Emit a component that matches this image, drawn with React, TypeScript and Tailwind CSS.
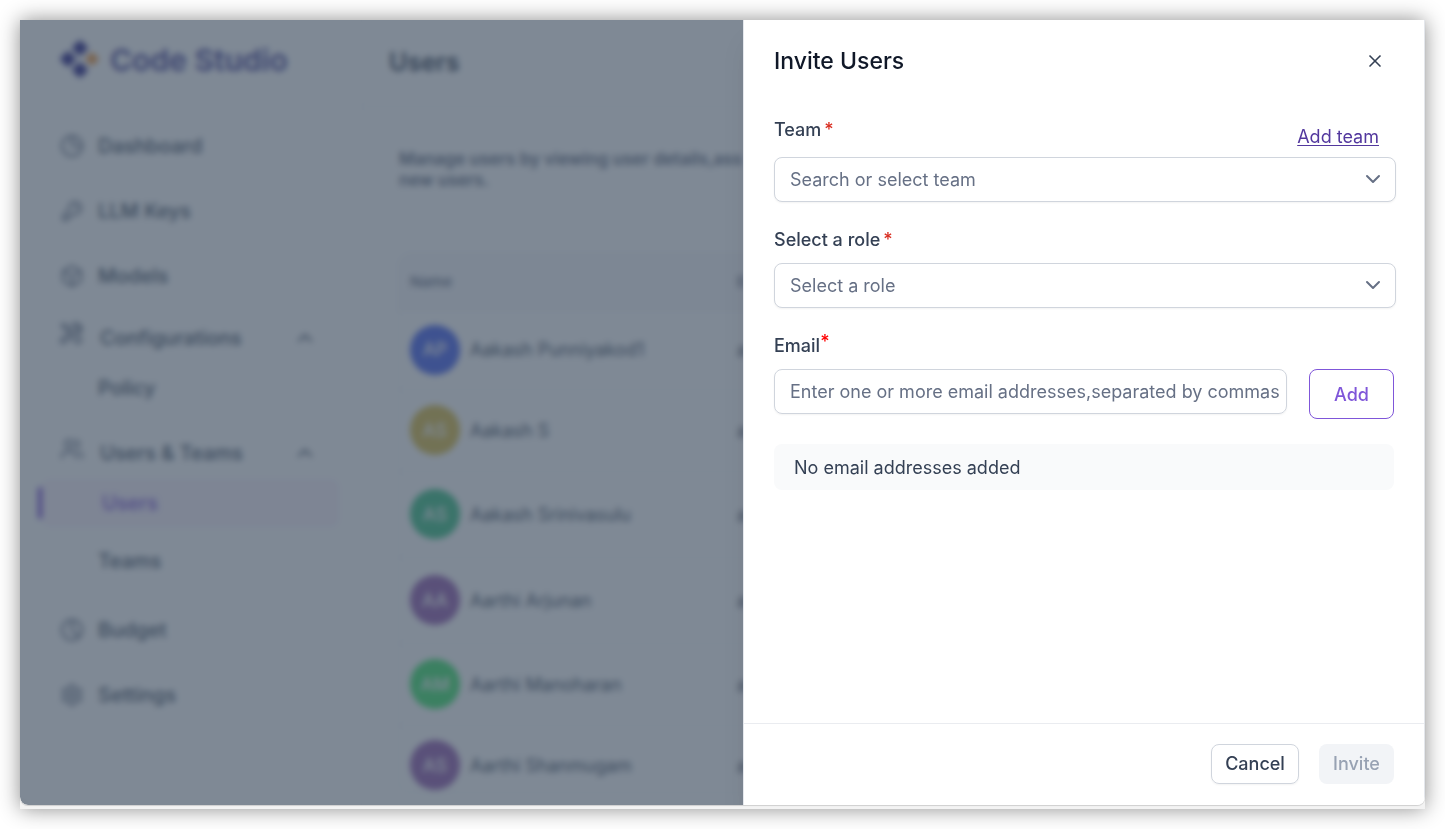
import { useState, type ReactNode } from "react";
import { Box, ChevronDown, ChevronUp, Settings, Users, X } from "lucide-react";

function Logo() {
  return (
    <svg viewBox="0 0 40 40" className="size-10 shrink-0" aria-hidden="true">
      <g fill="#2f2a8c">
        <rect x="14" y="3" width="12" height="12" rx="2" transform="rotate(45 20 9)" />
        <rect x="2" y="14" width="12" height="12" rx="2" transform="rotate(45 8 20)" />
        <rect x="14" y="25" width="12" height="12" rx="2" transform="rotate(45 20 31)" />
      </g>
      <rect x="27" y="15" width="10" height="10" rx="1" transform="rotate(45 32 20)" fill="#f0983f" />
    </svg>
  );
}

function LineIcon({ children }: { children: ReactNode }) {
  return (
    <svg
      viewBox="0 0 24 24"
      className="size-6"
      fill="none"
      stroke="currentColor"
      strokeWidth="2"
      strokeLinecap="round"
      strokeLinejoin="round"
      aria-hidden="true"
    >
      {children}
    </svg>
  );
}

const PieIcon = () => (
  <LineIcon>
    <circle cx="12" cy="12" r="10" />
    <path d="M12 2v10h10" />
  </LineIcon>
);

const BudgetIcon = () => (
  <LineIcon>
    <circle cx="12" cy="12" r="10" />
    <path d="M12 2v10l7 7" />
  </LineIcon>
);

const KeyIcon = () => (
  <LineIcon>
    <path d="M17 9a2 2 0 0 0-2-2M15 15a6 6 0 1 0-6-6c0 .27.02.54.05.81.06.43.09.65.07.79-.02.14-.05.21-.12.34-.06.12-.18.24-.42.48l-5.11 5.11c-.17.17-.26.26-.32.36-.06.09-.1.19-.12.29-.03.11-.03.24-.03.48V19.4c0 .56 0 .84.11 1.05.1.19.25.35.44.44.21.11.49.11 1.05.11H7v-2h2v-2h2l1.58-1.58c.24-.24.36-.36.48-.42.12-.07.2-.1.34-.12.14-.02.36.01.79.07.27.03.54.05.81.05Z" />
  </LineIcon>
);

const ToolsIcon = () => (
  <LineIcon>
    <path d="M6 6l4.5 4.5M6 6H3L2 3l1-1 3 1v3zM19.3 2.7l-2.6 2.6a1 1 0 0 0 0 1.4l.6.6a1 1 0 0 0 1.4 0l2.6-2.6a5 5 0 0 1-6.7 6.2 1 1 0 0 0-1 .2L4.5 20.5a2.1 2.1 0 0 1-3-3l9.4-9.1a1 1 0 0 0 .2-1 5 5 0 0 1 8.2-4.7zM12 16l4.5 4.5a2.1 2.1 0 0 0 3 0l1-1a2.1 2.1 0 0 0 0-3L17 13" />
  </LineIcon>
);

function NavLink({ icon, label, className }: { icon?: ReactNode; label: string; className: string }) {
  return (
    <a href="#" className={`flex items-center ${className}`}>
      <span className="flex w-[38px] shrink-0 text-[#667085]">{icon}</span>
      {label}
    </a>
  );
}

function NavGroup({ icon, label, className }: { icon: ReactNode; label: string; className: string }) {
  return (
    <button type="button" className={`flex items-center text-left ${className}`}>
      <span className="flex w-10 shrink-0 pb-2 text-[#667085]">{icon}</span>
      <span className="grow">{label}</span>
      <ChevronUp className="mr-11 size-6" />
    </button>
  );
}

function Sidebar() {
  return (
    <nav className="flex w-[342px] shrink-0 flex-col border-r border-[#f9fafb] text-[20px] font-medium text-[#475467]">
      <div className="flex h-[93px] items-start gap-[10px] pt-[19px] pl-10">
        <Logo />
        <span className="text-[30px] leading-[42px] font-semibold text-[#4a469a]">Code Studio</span>
      </div>
      <NavLink icon={<PieIcon />} label="Dashboard" className="h-[65px] pl-10" />
      <NavLink icon={<KeyIcon />} label="LLM Keys" className="h-[65px] pl-10" />
      <NavLink icon={<Box />} label="Models" className="h-[65px] pl-10" />
      <NavGroup icon={<ToolsIcon />} label="Configurations" className="h-[59px] pl-10" />
      <NavLink label="Policy" className="h-[42px] pl-10" />
      <NavGroup icon={<Users />} label="Users & Teams" className="mt-[18px] h-[52px] pl-10" />
      <div className="flex h-12 items-center pr-[22px] pl-[18px]">
        <span className="h-8 w-1 rounded-full bg-[#6d3fd1]" />
        <a href="#" className="flex h-full grow items-center rounded-lg bg-[#fbf3fd] pl-15 text-[#7f56d9]">
          Users
        </a>
      </div>
      <NavLink label="Teams" className="h-[68px] pl-10" />
      <NavLink icon={<BudgetIcon />} label="Budget" className="h-[70px] pl-10" />
      <NavLink icon={<Settings />} label="Settings" className="h-[60px] pl-10" />
    </nav>
  );
}

const people = [
  { initials: "AP", name: "Aakash Punniyakod1", color: "bg-[#506af0]", height: "h-[79px]" },
  { initials: "AS", name: "Aakash S", color: "bg-[#dcc050]", height: "h-[82px]" },
  { initials: "AS", name: "Aakash Srinivasulu", color: "bg-[#45c48a]", height: "h-[86px]" },
  { initials: "AA", name: "Aarthi Arjunan", color: "bg-[#9a66b4]", height: "h-[86px]" },
  { initials: "AM", name: "Aarthi Manoharan", color: "bg-[#48e673]", height: "h-[82px]" },
  { initials: "AS", name: "Aarthi Shanmugam", color: "bg-[#9a66b4]", height: "h-[80px]" },
];

function UsersPage() {
  return (
    <main className="flex min-w-0 grow flex-col">
      <header className="flex h-[87px] shrink-0 items-center border-b border-[#f2f4f7] pl-[27px]">
        <h1 className="text-[25px] font-semibold text-[#344054]">Users</h1>
      </header>
      <p className="mt-[42px] pl-[37px] text-[17px] leading-[21px] font-semibold whitespace-nowrap text-[#667085]">
        Manage users by viewing user details,ass
        <br />
        new users.
      </p>
      <div className="mt-[62px] mb-3 ml-9 min-h-0 flex-1 overflow-hidden rounded-xl border border-[#f2f4f7]">
        <table className="w-full table-fixed text-left">
          <thead>
            <tr className="h-[56px] border-b border-[#f2f4f7] bg-[#f9f9fc] text-[15px] text-[#667085]">
              <th className="w-[338px] pl-[11px] font-medium">Name</th>
              <th className="font-medium">Email</th>
            </tr>
          </thead>
          <tbody>
            {people.map((p) => (
              <tr key={p.name} className={`border-b border-[#f2f4f7] text-[18px] text-[#475467] ${p.height}`}>
                <td className="pl-[11px]">
                  <div className="flex items-center gap-[10px]">
                    <span
                      className={`flex size-[50px] items-center justify-center rounded-full font-medium text-white ${p.color}`}
                    >
                      {p.initials}
                    </span>
                    {p.name}
                  </div>
                </td>
                <td>a</td>
              </tr>
            ))}
          </tbody>
        </table>
      </div>
    </main>
  );
}

function SelectBox({ id, placeholder }: { id: string; placeholder: string }) {
  return (
    <div className="relative">
      <select
        id={id}
        className="h-[45px] w-full appearance-none rounded-lg border border-[#d0d5dd] bg-white pr-10 pl-[15px] text-[18px] text-[#667085] shadow-xs"
      >
        <option>{placeholder}</option>
      </select>
      <ChevronDown
        className="pointer-events-none absolute top-[10px] right-[11px] size-6 text-[#667085]"
        strokeWidth={2}
      />
    </div>
  );
}

function InvitePanel() {
  const [email, setEmail] = useState("");
  return (
    <section
      role="dialog"
      aria-labelledby="invite-title"
      className="flex w-[682px] flex-col border-x border-[#e4e7ec] bg-white text-[18px] text-[#344054] shadow-xl"
    >
      <header className="flex h-[82px] items-center justify-between pr-[39px] pl-[30px]">
        <h2 id="invite-title" className="text-[23px] font-medium text-[#101828]">
          Invite Users
        </h2>
        <button type="button" aria-label="Close">
          <X className="size-5 text-[#344054]" strokeWidth={2} />
        </button>
      </header>

      <form className="flex grow flex-col pt-[17px] pr-7 pl-[30px]">
        <div className="flex h-[38px] items-start justify-between">
          <label htmlFor="team" className="flex gap-[3px] leading-[22px] font-medium">
            Team<span className="text-[#d92d20]">*</span>
          </label>
          <a href="#" className="mt-[7px] mr-[17px] leading-[22px] text-[#53389e] underline underline-offset-2">
            Add team
          </a>
        </div>
        <SelectBox id="team" placeholder="Search or select team" />

        <label htmlFor="role" className="mt-[27px] mb-3 flex h-[22px] gap-[3px] leading-[22px] font-medium">
          Select a role<span className="text-[#d92d20]">*</span>
        </label>
        <SelectBox id="role" placeholder="Select a role" />

        <label htmlFor="email" className="mt-[25px] mb-3 h-6 leading-[22px] font-medium">
          Email<sup className="top-0 align-[4px] text-[18px] leading-none text-[#ff0000]">*</sup>
        </label>
        <div className="mr-0.5 flex items-start gap-[22px]">
          <input
            id="email"
            type="text"
            value={email}
            onChange={(e) => setEmail(e.target.value)}
            placeholder="Enter one or more email addresses,separated by commas"
            className="h-[45px] min-w-0 grow rounded-lg border border-[#d0d5dd] pr-1 pl-[15px] shadow-xs placeholder:text-[#667085]"
          />
          <button type="button" className="h-[50px] w-[85px] rounded-lg border border-[#7f56d9] font-medium text-[#7f56d9]">
            Add
          </button>
        </div>
        <p className="mt-[25px] mr-0.5 flex h-[46px] items-center rounded-lg bg-[#f9fafb] pl-5">No email addresses added</p>
      </form>

      <footer className="flex h-[82px] items-center justify-end gap-5 border-t border-[#eaecf0] pr-[30px] pb-0.5 font-medium">
        <button type="button" className="h-10 w-[88px] rounded-lg border border-[#d0d5dd] shadow-xs">
          Cancel
        </button>
        <button type="button" disabled className="h-10 w-[75px] rounded-lg bg-[#f2f4f7] text-[#98a2b3]">
          Invite
        </button>
      </footer>
    </section>
  );
}

export default function App() {
  return (
    <div className="flex h-screen min-h-[640px] bg-white p-5 font-['Inter',sans-serif]">
      <div className="flex min-w-0 grow bg-[#f3f3f3] pb-1 shadow-[0_0_20px_rgba(0,0,0,0.45)]">
        <div className="relative flex min-w-0 grow overflow-hidden rounded-b-lg bg-white shadow-[0_1px_1px_rgba(0,0,0,0.15)]">
          <Sidebar />
          <UsersPage />
          <div className="absolute inset-0 flex justify-end bg-[#344457]/63 backdrop-blur-[3px]">
            <InvitePanel />
          </div>
        </div>
      </div>
    </div>
  );
}
